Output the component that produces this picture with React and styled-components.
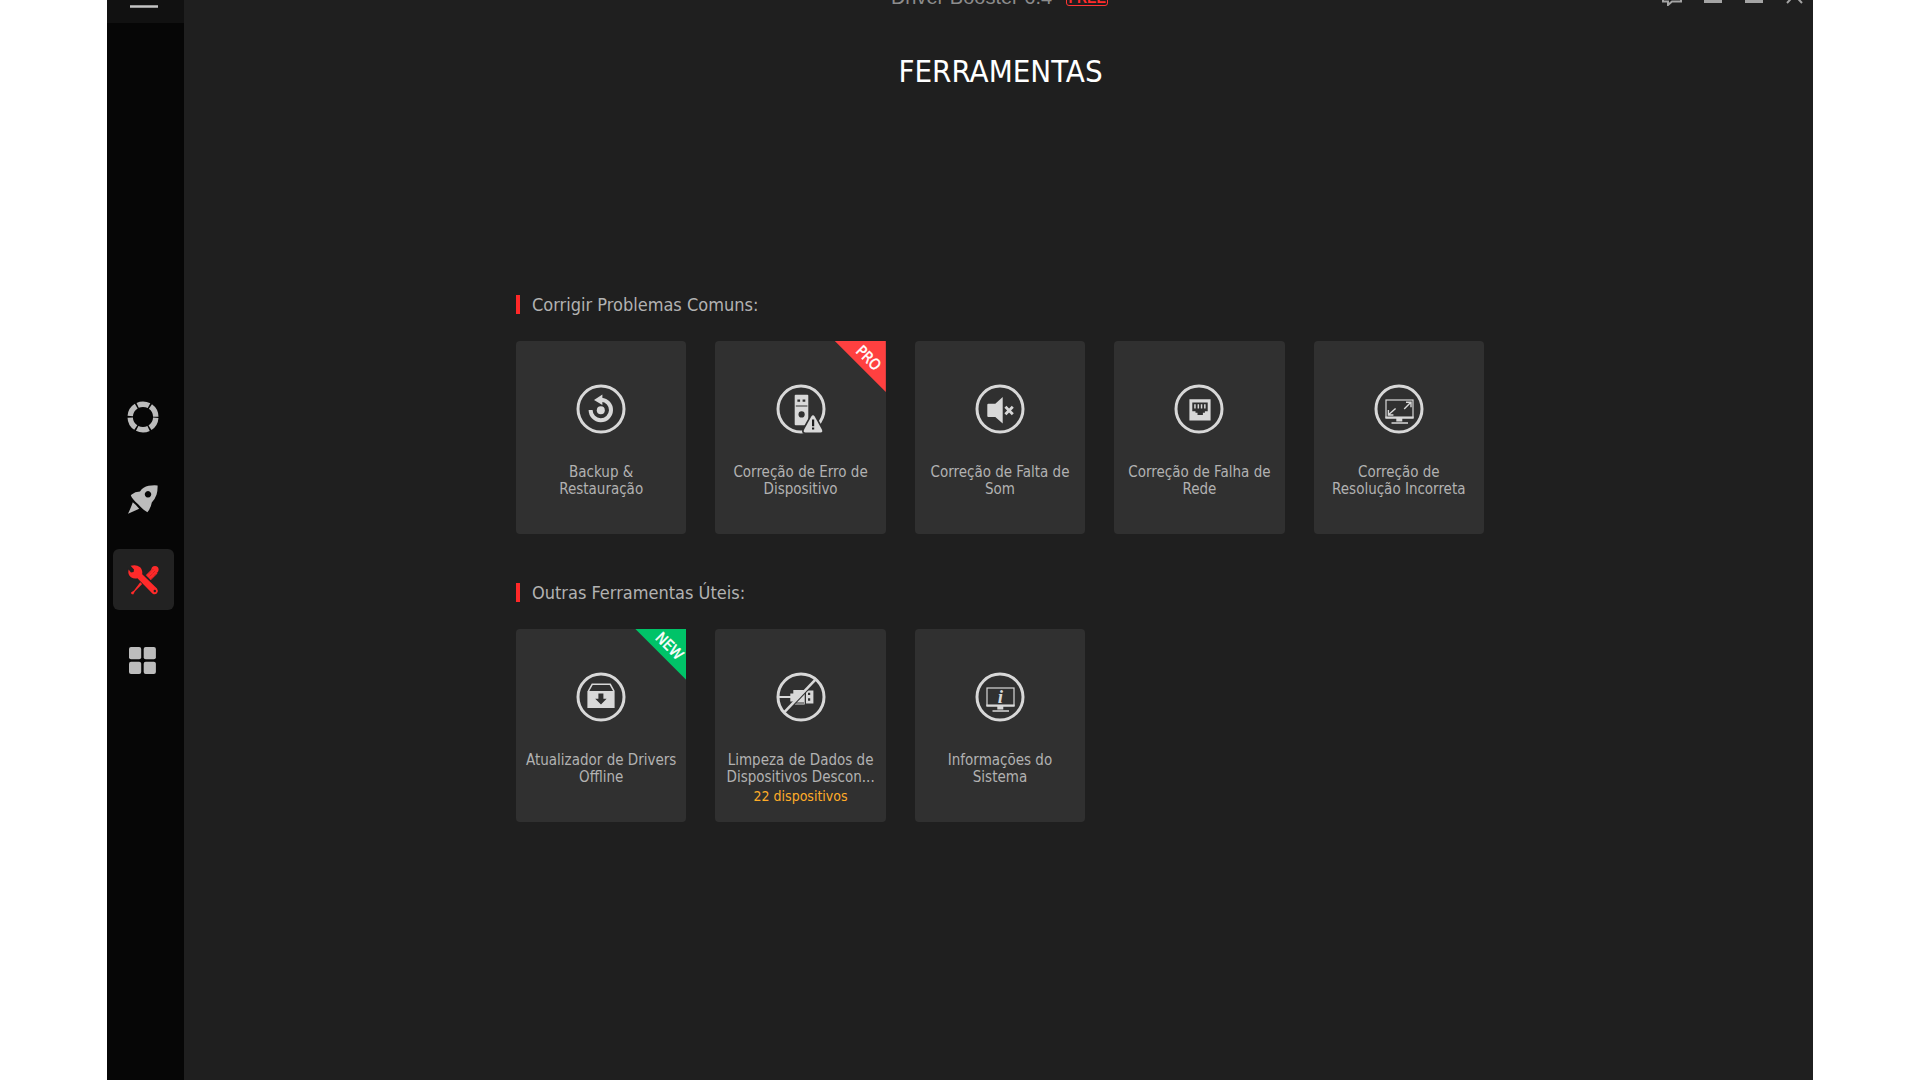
import React from 'react';
import styled, { createGlobalStyle, css } from 'styled-components';

const GlobalStyle = createGlobalStyle`
  * { box-sizing: border-box; }
  body {
    margin: 0;
    background: #ffffff;
    color: #b2b2b2;
    font-family: 'DejaVu Sans Condensed', 'DejaVu Sans', sans-serif;
    overflow: hidden;
  }
  button { font: inherit; color: inherit; border: 0; padding: 0; background: none; cursor: pointer; }
  h1, h2, p { margin: 0; font-weight: 400; }
  svg { display: block; }
`;

const Page = styled.div`
  display: flex;
  min-height: 100vh;
  padding: 0 107px;
`;

const Sidebar = styled.aside`
  display: flex;
  flex-direction: column;
  flex: 0 0 77px;
  background: #060606;
`;

const MenuButton = styled.button`
  display: flex;
  align-items: flex-end;
  height: 23px;
  padding: 0 0 15px 23px;
  background: #111111;
  svg { flex: none; }
`;

const Nav = styled.nav`
  display: flex;
  flex: 1;
  flex-direction: column;
  justify-content: center;
  gap: 20px;
  padding: 0 0 26px 6px;
`;

const NavButton = styled.button`
  display: grid;
  place-items: center;
  width: 61px;
  height: 61px;
  padding-right: 1px;
  border-radius: 6px;
  color: ${(p) => (p.$active ? '#ff2a2a' : '#bcbcbc')};
  background: ${(p) => (p.$active ? '#222222' : 'transparent')};
`;

const Main = styled.main`
  display: flex;
  flex: 1;
  flex-direction: column;
  background: #1f1f1f;
`;

const TitleBar = styled.header`
  display: grid;
  grid-template-columns: 1fr auto 1fr;
  align-items: end;
  height: 30px;
  margin-top: -24px;
`;

const Brand = styled.div`
  display: flex;
  align-items: flex-end;
  grid-column: 2;
  gap: 14px;
  padding-left: 2px;
`;

const BrandName = styled.span`
  font-family: 'Liberation Sans', Arial, sans-serif;
  font-size: 20px;
  line-height: 18px;
  color: #8c8c8c;
`;

const FreeTag = styled.span`
  width: 42px;
  border: 1px solid #ff3535;
  border-radius: 3px;
  font-family: 'Liberation Sans', Arial, sans-serif;
  font-size: 14px;
  font-weight: 700;
  line-height: 14px;
  text-align: center;
  color: #ff2a2a;
`;

const WindowControls = styled.div`
  display: flex;
  justify-content: flex-end;
  gap: 21px;
  padding-right: 8px;
  color: #a4a4a4;
`;

const Heading = styled.h1`
  padding: 43px 0 0 4px;
  font-size: 31px;
  line-height: 44px;
  text-align: center;
  color: #ffffff;
`;

const Tools = styled.div`
  display: flex;
  flex-direction: column;
  gap: 48px;
  width: 100%;
  max-width: 971px;
  margin: 201px auto 0;
  padding-left: 3px;
`;

const SectionTitle = styled.h2`
  display: flex;
  align-items: center;
  gap: 12px;
  margin-bottom: 26px;
  font-size: 18px;
  line-height: 21px;
  &::before {
    content: '';
    width: 4px;
    height: 19px;
    background: #ff2828;
  }
`;

const CardGrid = styled.div`
  display: grid;
  grid-template-columns: repeat(5, 1fr);
  gap: 29px;
`;

const Card = styled.button`
  position: relative;
  display: flex;
  flex-direction: column;
  align-items: center;
  min-height: 193px;
  padding: 43px 8px 0;
  border-radius: 4px;
  background: #303030;
  font-size: 15px;
  line-height: 17px;
  text-align: center;
`;

const CardLabel = styled.span`
  margin-top: 30px;
  white-space: pre-line;
`;

const CardNote = styled.span`
  margin-top: 2px;
  font-size: 14px;
  color: #ffac28;
`;

const cornerColors = {
  PRO: css`background: #ff4040;`,
  NEW: css`background: #00c368;`,
};

const Corner = styled.span`
  position: absolute;
  top: 0;
  right: 0;
  display: grid;
  place-items: center;
  width: 51px;
  height: 51px;
  padding: 0 0 16px 16px;
  clip-path: polygon(0 0, 100% 0, 100% 100%);
  color: #ffffff;
  font-size: 15px;
  ${(p) => cornerColors[p.$kind]}
`;

const CornerText = styled.span`
  transform: rotate(45deg);
  -webkit-text-stroke: 0.4px #ffffff;
`;

const Icon = ({ size = 50, children }) => (
  <svg width={size} height={size} viewBox={`0 0 ${size} ${size}`} fill="none" aria-hidden="true">
    {children}
  </svg>
);

const INK = '#d8d8d8';
const CARD = '#303030';

const Ring = () => <circle cx="25" cy="25" r="23" stroke={INK} strokeWidth="3" />;

const Monitor = () => (
  <g>
    <rect x="12" y="16" width="27" height="17.5" stroke={INK} strokeWidth="1.2" />
    <path d="M11.4 32.4h28.2v2.4H11.4zM22.3 34.8h6v2.6h-6zM17.5 38.2h16.5v1.5H17.5z" fill={INK} />
  </g>
);

const BackupIcon = () => (
  <Icon>
    <Ring />
    <path d="M14.6 26A10.2 10.2 0 1 0 25.5 15.8" stroke={INK} strokeWidth="4" />
    <path d="M18 16 26.4 10.6V21z" fill={INK} />
    <circle cx="24.8" cy="26.2" r="4" fill={INK} />
  </Icon>
);

const DeviceIcon = () => (
  <Icon>
    <Ring />
    <rect x="18.7" y="10.7" width="13.6" height="30.6" rx="1" fill={INK} />
    <path d="M21.4 15.4h2.7v2.4h-2.7zM26.6 15.4h2.7v2.4h-2.7zM19.8 21.4h11.6v1H19.8z" fill={CARD} />
    <circle cx="25.6" cy="30.4" r="3.1" fill={CARD} />
    <path
      d="M35.3 32.6Q37 30 38.7 32.6L46 45.8Q47 48.4 44.6 48.4H29.4Q27 48.4 28 45.8z"
      fill={INK}
      stroke={CARD}
      strokeWidth="3.4"
      paintOrder="stroke"
    />
    <path d="M36 35.6h2.2v6.6H36zM36 43.6h2.2v2H36z" fill="#1c1c1c" />
  </Icon>
);

const SoundIcon = () => (
  <Icon>
    <Ring />
    <path d="M13.3 19.7h7L27.7 13v26.4L20.3 33h-7q-1 0-1-1V20.7q0-1 1-1z" fill={INK} />
    <path d="M31.4 23.8l5.4 5.4M36.8 23.8l-5.4 5.4" stroke={INK} strokeWidth="2.8" strokeLinecap="square" />
  </Icon>
);

const NetworkIcon = () => (
  <Icon>
    <Ring />
    <path
      fillRule="evenodd"
      d="M15.4 15.2h21.2v21.2H15.4zM18.3 18.4v8.8h3.2v1.6h2v2.2h5.4v-2.2h2v-1.6h2.8v-8.8z"
      fill={INK}
    />
    <path d="M20.2 20.2h1.5v4.2h-1.5zM23.6 20.2h1.5v4.2h-1.5zM26.8 20.2h1.5v4.2h-1.5zM30.1 20.2h1.5v4.2h-1.5z" fill={INK} />
  </Icon>
);

const ResolutionIcon = () => (
  <Icon>
    <Ring />
    <Monitor />
    <path d="M30.2 25 36.6 18.6M32 18.3h5v5M21.6 24.4 14.8 30.6M14.4 26v5h5" stroke={INK} strokeWidth="1.4" />
  </Icon>
);

const OfflineIcon = () => (
  <Icon>
    <Ring />
    <path d="M12.4 19.2 16.2 12.3h18L38 19.2" stroke={INK} strokeWidth="1.5" />
    <path
      fillRule="evenodd"
      d="M11.4 18.9h27.2V36H11.4zM22.4 21.6v5.2h-3.2L25 32.6l5.6-5.8h-3.2v-5.2z"
      fill={INK}
    />
  </Icon>
);

const CleanupIcon = () => (
  <Icon>
    <Ring />
    <path d="M2 24h12.3v-2.4h3V18h11.4v14.4H18.6l-1.3-2.8h-3V26H2z" fill={INK} />
    <path d="M20 31h8" stroke={CARD} strokeWidth="1" />
    <path fillRule="evenodd" d="M30 18.6h7.4v12.8H30zM32 20.7v2.4h2.2v-2.4zM32 26.3v2.4h2.2v-2.4z" fill={INK} />
    <path d="M37.6 10.8 11.2 38.4" stroke={CARD} strokeWidth="3" />
    <path d="M39.9 7.2 8.4 40.2" stroke={INK} strokeWidth="2.6" />
  </Icon>
);

const InfoText = styled.text`
  font-family: 'Liberation Serif', serif;
  font-size: 19px;
  font-weight: 700;
  font-style: italic;
`;

const InfoIcon = () => (
  <Icon>
    <Ring />
    <Monitor />
    <InfoText x="25.5" y="31" textAnchor="middle" fill={INK}>i</InfoText>
  </Icon>
);

const HomeIcon = () => (
  <Icon size={34}>
    <circle cx="17" cy="17" r="12.8" stroke="currentColor" strokeWidth="5.4" strokeDasharray="11.8 1.604" strokeDashoffset="-0.8" />
  </Icon>
);

const BoostIcon = () => (
  <Icon size={34}>
    <path
      fillRule="evenodd"
      d="M5.6 13.4Q9 10.6 14 10.4 17 6 22.6 4.8 27 4 31.6 4.4 31.8 9 30.6 13.4 29 18 25.8 21.6 25 27 21.4 31.2 17 29 12.4 23.6 6.4 18 4.8 14.4zM22 10.1a3.2 3.2 0 1 0 .01 0z"
      fill="currentColor"
    />
    <path d="M6.8 21.2Q10 23.6 13.2 27.8 8 30.2 2 32.8 4.8 27 6.8 21.2z" fill="currentColor" />
  </Icon>
);

const ToolsIcon = () => (
  <Icon size={34}>
    <path d="M22.2 15.8 29 9" stroke="currentColor" strokeWidth="7" />
    <circle cx="29" cy="7.6" r="3.6" fill="currentColor" />
    <path d="M18.8 12.6 25.6 19.4" stroke="#222222" strokeWidth="0.8" />
    <path d="M22.8 15.4 29.4 8.6M20.8 13.6l6.6-6.6M24.8 17l6.4-6.6" stroke="#8f1c1c" strokeWidth="0.7" strokeDasharray="1 1" />
    <path d="M17.2 21 9 29.2 7.2 32.4 5.4 32 5 30.6 8 28.6 15.2 19z" fill="currentColor" />
    <path
      d="M4.6 3.8 8 7.4 7.6 10 5 10.6 2.6 7.4Q1.4 12.6 5 15.2 8 17 11.4 16.2L26.4 31.4Q29 33.2 31 31.2 32.8 29 31 26.6L16.2 12.2Q16.8 8 14.2 5.2 10 2 4.6 3.8z"
      fill="currentColor"
      stroke="#222222"
      strokeWidth="1.6"
      paintOrder="stroke"
    />
    <circle cx="28.8" cy="29" r="1.2" fill="#222222" />
  </Icon>
);

const AppsIcon = () => (
  <Icon size={34}>
    {[[3, 4], [17.7, 4], [3, 18.8], [17.7, 18.8]].map(([x, y]) => (
      <rect key={`${x}-${y}`} x={x} y={y} width="12.2" height="12.2" rx="2" fill="currentColor" />
    ))}
  </Icon>
);

const navItems = [
  { label: 'Início', icon: HomeIcon },
  { label: 'Acelerar', icon: BoostIcon },
  { label: 'Ferramentas', icon: ToolsIcon, active: true },
  { label: 'Aplicativos', icon: AppsIcon },
];

const sections = [
  {
    title: 'Corrigir Problemas Comuns:',
    cards: [
      { label: 'Backup &\nRestauração', icon: BackupIcon },
      { label: 'Correção de Erro de\nDispositivo', icon: DeviceIcon, corner: 'PRO' },
      { label: 'Correção de Falta de\nSom', icon: SoundIcon },
      { label: 'Correção de Falha de\nRede', icon: NetworkIcon },
      { label: 'Correção de\nResolução Incorreta', icon: ResolutionIcon },
    ],
  },
  {
    title: 'Outras Ferramentas Úteis:',
    cards: [
      { label: 'Atualizador de Drivers\nOffline', icon: OfflineIcon, corner: 'NEW' },
      { label: 'Limpeza de Dados de\nDispositivos Descon...', icon: CleanupIcon, note: '22 dispositivos' },
      { label: 'Informações do\nSistema', icon: InfoIcon },
    ],
  },
];

const controls = [
  { label: 'Comentários', path: 'M1 3h18v12.5h-9l-4 3.5v-3.5H1z' },
  { label: 'Minimizar', path: 'M1 14h18M1 16h18' },
  { label: 'Maximizar', path: 'M2 3h16v13H2zM2 14h16' },
  { label: 'Fechar', path: 'M2 1l15 16M17 1 2 17' },
];

export default function App() {
  return (
    <>
      <GlobalStyle />
      <Page>
        <Sidebar>
          <MenuButton aria-label="Menu">
            <svg width="28" height="20" viewBox="0 0 28 20" aria-hidden="true">
              <path d="M0 1.5h28M0 10h28M0 18.5h28" stroke="#c4c4c4" strokeWidth="2.4" />
            </svg>
          </MenuButton>
          <Nav>
            {navItems.map(({ label, icon: Glyph, active }) => (
              <NavButton key={label} aria-label={label} $active={active}>
                <Glyph />
              </NavButton>
            ))}
          </Nav>
        </Sidebar>
        <Main>
          <TitleBar>
            <Brand>
              <BrandName>Driver Booster 6.4</BrandName>
              <FreeTag>FREE</FreeTag>
            </Brand>
            <WindowControls>
              {controls.map(({ label, path }) => (
                <button key={label} aria-label={label}>
                  <svg width="20" height="20" viewBox="0 0 20 20" fill="none" aria-hidden="true">
                    <path d={path} stroke="currentColor" strokeWidth="2" />
                  </svg>
                </button>
              ))}
            </WindowControls>
          </TitleBar>
          <Heading>FERRAMENTAS</Heading>
          <Tools>
            {sections.map(({ title, cards }) => (
              <section key={title}>
                <SectionTitle>{title}</SectionTitle>
                <CardGrid>
                  {cards.map(({ label, icon: Glyph, corner, note }) => (
                    <Card key={label}>
                      <Glyph />
                      <CardLabel>{label}</CardLabel>
                      {note && <CardNote>{note}</CardNote>}
                      {corner && (
                        <Corner $kind={corner}>
                          <CornerText>{corner}</CornerText>
                        </Corner>
                      )}
                    </Card>
                  ))}
                </CardGrid>
              </section>
            ))}
          </Tools>
        </Main>
      </Page>
    </>
  );
}
